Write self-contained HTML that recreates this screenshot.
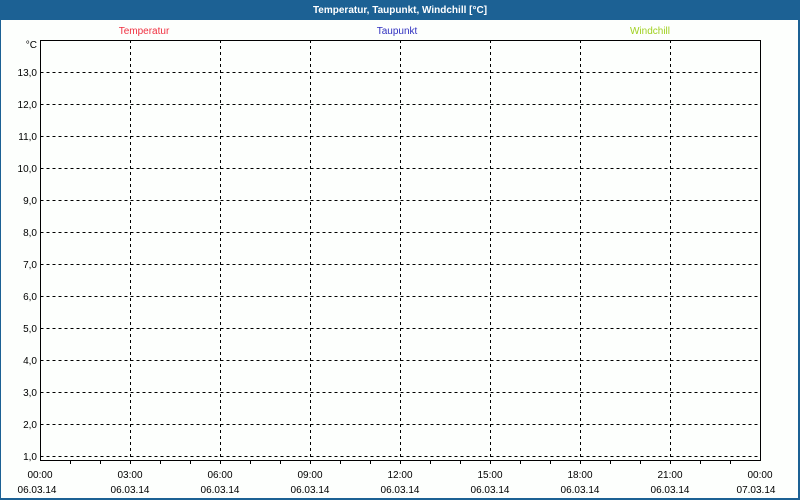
<!DOCTYPE html>
<html><head><meta charset="utf-8"><style>
html,body{margin:0;padding:0;background:#fff}
svg{display:block}
text{font-family:"Liberation Sans",sans-serif;font-size:10px}
</style></head><body>
<svg width="800" height="500" viewBox="0 0 800 500" xmlns="http://www.w3.org/2000/svg">
<rect x="0" y="0" width="800" height="500" fill="#1c6194"/>
<rect x="1" y="20" width="797" height="478" fill="#fdfffd"/>
<text x="400" y="13" fill="#fff" font-weight="bold" font-size="10.5" text-anchor="middle">Temperatur, Taupunkt, Windchill [°C]</text>
<text x="144" y="34" fill="#f03040" text-anchor="middle">Temperatur</text>
<text x="397" y="34" fill="#3030c0" text-anchor="middle">Taupunkt</text>
<text x="650" y="34" fill="#a0d020" text-anchor="middle">Windchill</text>
<text x="37" y="48" fill="#000" text-anchor="end">°C</text>
<g stroke="#000" stroke-width="1" stroke-dasharray="3,3" fill="none">
<path d="M40.5 72.5H760M40.5 104.5H760M40.5 136.5H760M40.5 168.5H760M40.5 200.5H760M40.5 232.5H760M40.5 264.5H760M40.5 296.5H760M40.5 328.5H760M40.5 360.5H760M40.5 392.5H760M40.5 424.5H760M40.5 456.5H760"/>
<path d="M130.5 40V460M220.5 40V460M310.5 40V460M400.5 40V460M490.5 40V460M580.5 40V460M670.5 40V460"/>
</g>
<rect x="40.5" y="40.5" width="720" height="420" fill="none" stroke="#000" stroke-width="1"/>
<g stroke="#000" stroke-width="1">
<path d="M70.5 461v3M100.5 461v3M130.5 461v3M160.5 461v3M190.5 461v3M220.5 461v3M250.5 461v3M280.5 461v3M310.5 461v3M340.5 461v3M370.5 461v3M400.5 461v3M430.5 461v3M460.5 461v3M490.5 461v3M520.5 461v3M550.5 461v3M580.5 461v3M610.5 461v3M640.5 461v3M670.5 461v3M700.5 461v3M730.5 461v3"/>
</g>
<g fill="#000" text-anchor="end">
<text x="37" y="76">13,0</text><text x="37" y="108">12,0</text><text x="37" y="140">11,0</text>
<text x="37" y="172">10,0</text><text x="37" y="204">9,0</text><text x="37" y="236">8,0</text>
<text x="37" y="268">7,0</text><text x="37" y="300">6,0</text><text x="37" y="332">5,0</text>
<text x="37" y="364">4,0</text><text x="37" y="396">3,0</text><text x="37" y="428">2,0</text>
<text x="37" y="460">1,0</text>
</g>
<g fill="#000" text-anchor="middle">
<text x="40" y="478">00:00</text><text x="130" y="478">03:00</text><text x="220" y="478">06:00</text>
<text x="310" y="478">09:00</text><text x="400" y="478">12:00</text><text x="490" y="478">15:00</text>
<text x="580" y="478">18:00</text><text x="670" y="478">21:00</text><text x="760" y="478">00:00</text>
<text x="37" y="493">06.03.14</text><text x="130" y="493">06.03.14</text><text x="220" y="493">06.03.14</text>
<text x="310" y="493">06.03.14</text><text x="400" y="493">06.03.14</text><text x="490" y="493">06.03.14</text>
<text x="580" y="493">06.03.14</text><text x="670" y="493">06.03.14</text><text x="756" y="493">07.03.14</text>
</g>
</svg>
</body></html>
